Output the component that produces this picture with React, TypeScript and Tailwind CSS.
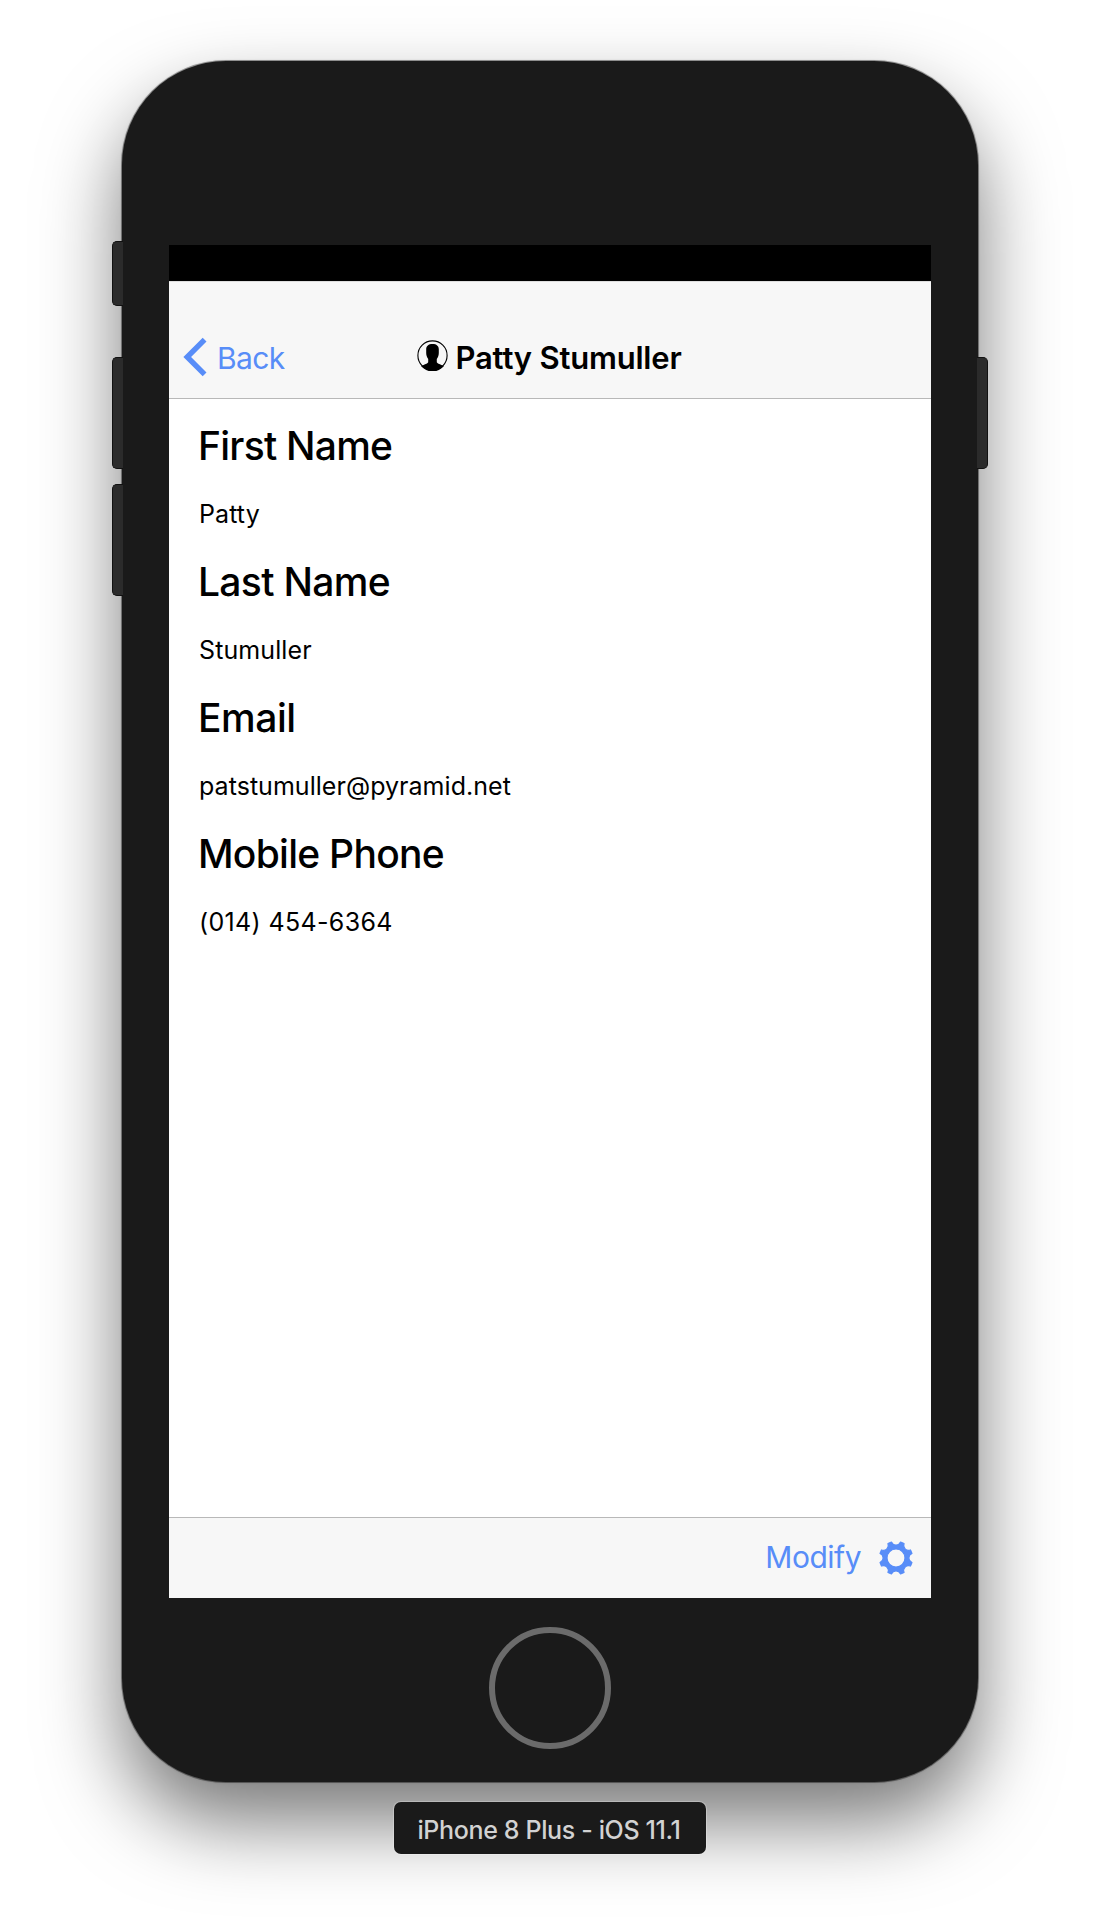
import React from "react";

const fields = [
  { label: "First Name", value: "Patty", labelTracking: "tracking-[-0.75px]", valueTracking: "tracking-[0.1px]" },
  { label: "Last Name", value: "Stumuller", labelTracking: "tracking-[-0.69px]", valueTracking: "tracking-[0.1px]" },
  { label: "Email", value: "patstumuller@pyramid.net", labelTracking: "tracking-[-0.45px]", valueTracking: "tracking-[0.04px]" },
  { label: "Mobile Phone", value: "(014) 454-6364", labelTracking: "tracking-[-0.73px]", valueTracking: "tracking-[0.35px]" },
];

function BackChevron() {
  return (
    <svg className="h-10 w-6 shrink-0" viewBox="0 0 24 40" fill="none" stroke="currentColor" strokeWidth="5.4">
      <path d="M21.6 2.6 4.2 20 21.6 37.4" />
    </svg>
  );
}

function PersonIcon() {
  return (
    <svg className="size-[31px] shrink-0" viewBox="0 0 31 31">
      <circle cx="15.5" cy="15.5" r="14.6" fill="none" stroke="#000" strokeWidth="1.1" />
      <path
        d="M15.500 3.900C11.500 3.900 9.200 5.800 9.200 9.300V13C9.200 15.500 10 17.500 11.200 18.900V22.300C10.800 23.600 8.500 24.200 6.600 24.900C5.500 25.300 4.700 25.700 4 26.100A15 15 0 0 0 27 26.100C26.300 25.700 25.500 25.300 24.400 24.900C22.500 24.200 20.200 23.600 19.800 22.300V18.900C21 17.500 21.800 15.500 21.800 13V9.300C21.800 5.800 19.500 3.900 15.500 3.900Z"
        fill="#000"
      />
    </svg>
  );
}

const point = (radius: number, degrees: number) => {
  const t = (degrees * Math.PI) / 180;
  return `${(17 + radius * Math.cos(t)).toFixed(2)} ${(17 + radius * Math.sin(t)).toFixed(2)}`;
};

// Eight teeth joined by scooped gaps.
const gearOutline =
  Array.from({ length: 8 }, (_, k) => {
    const a = 22.5 + 45 * k;
    return `${k === 0 ? "M" : "L"}${point(16.6, a - 6.5)}L${point(16.6, a + 6.5)}C${point(12.2, a + 9)} ${point(12.2, a + 36)} ${point(16.6, a + 38.5)}`;
  }).join("") + "Z";

function GearIcon() {
  return (
    <svg className="size-[34px] shrink-0" viewBox="0 0 34 34" fill="currentColor" stroke="currentColor" strokeWidth="1.2" strokeLinejoin="round">
      <path fillRule="evenodd" d={`${gearOutline}M17 8A9 9 0 1 0 17 26A9 9 0 1 0 17 8Z`} />
    </svg>
  );
}

function SideButton({ className }: { className: string }) {
  return <div className={`absolute w-[11px] border border-[#111] bg-[#2b2b2b] ${className}`} />;
}

export default function App() {
  return (
    <main className="flex h-[1931px] w-[1100px] flex-col items-center overflow-hidden bg-white pt-[61px] font-['Inter','Liberation_Sans',sans-serif] text-black">
      <div className="relative h-[1721px] w-[856px] shrink-0">
        <div className="flex h-full w-full flex-col items-center rounded-[104px] bg-[#1a1a1a] pt-[184px] shadow-[0_0_0_1px_rgba(0,0,0,0.35),0_0_3px_rgba(0,0,0,0.2),0_40px_80px_rgba(0,0,0,0.53)]">
          <div className="flex h-[1353px] w-[762px] shrink-0 flex-col border-t-[36px] border-black bg-white">
            <header className="grid h-[118px] shrink-0 grid-cols-[1fr_auto_1fr] items-end border-t border-b border-t-[#dedede] border-b-[#b8b8b8] bg-[#f7f7f7] pb-[21px]">
              <button className="flex h-10 items-center gap-[10px] pl-[14px] text-[30px] leading-10 tracking-[-0.6px] text-[#588df8]">
                <BackChevron />
                <span className="pt-px">Back</span>
              </button>
              <h1 className="flex h-10 items-center gap-[7px] pr-px text-[31px] font-semibold leading-10 tracking-[-0.2px]">
                <span className="-mt-[3px]">
                  <PersonIcon />
                </span>
                <span className="pt-0.5">Patty Stumuller</span>
              </h1>
              <span />
            </header>
            <section className="flex flex-1 flex-col gap-[31px] pt-[25px] pl-[29px]">
              {fields.map((f) => (
                <div key={f.label} className="flex flex-col gap-[31px]">
                  <h2 className={`h-11 text-[39px] font-medium leading-11 ${f.labelTracking}`}>{f.label}</h2>
                  <p className={`h-[30px] pl-px text-[25px] leading-[30px] ${f.valueTracking}`}>{f.value}</p>
                </div>
              ))}
            </section>
            <footer className="flex h-[81px] shrink-0 items-center justify-end gap-[18px] border-t border-[#b8b8b8] bg-[#f7f7f7] pr-[18px] text-[#588df8]">
              <span className="pb-0.5 text-[30px] leading-10 tracking-[-0.5px]">Modify</span>
              <GearIcon />
            </footer>
          </div>
          <div className="mt-[29px] size-[122px] shrink-0 rounded-full border-[6px] border-[#6b6b6b]" />
        </div>
        <SideButton className="top-[180px] -left-[10px] h-[65px] rounded-l-[5px] border-r-0" />
        <SideButton className="top-[296px] -left-[10px] h-[112px] rounded-l-[5px] border-r-0" />
        <SideButton className="top-[423px] -left-[10px] h-[112px] rounded-l-[5px] border-r-0" />
        <SideButton className="top-[296px] -right-[10px] h-[112px] rounded-r-[5px] border-l-0" />
      </div>
      <div className="relative mt-5 flex h-[52px] w-[312px] shrink-0 items-center justify-center rounded-[7px] bg-[#1a1a1a] text-[25px] font-medium tracking-[-0.36px] text-[#d2d2d2] shadow-[0_0_0_1px_rgba(255,255,255,0.25)]">
        <span className="pt-[5px] pr-0.5">iPhone 8 Plus - iOS 11.1</span>
      </div>
    </main>
  );
}
